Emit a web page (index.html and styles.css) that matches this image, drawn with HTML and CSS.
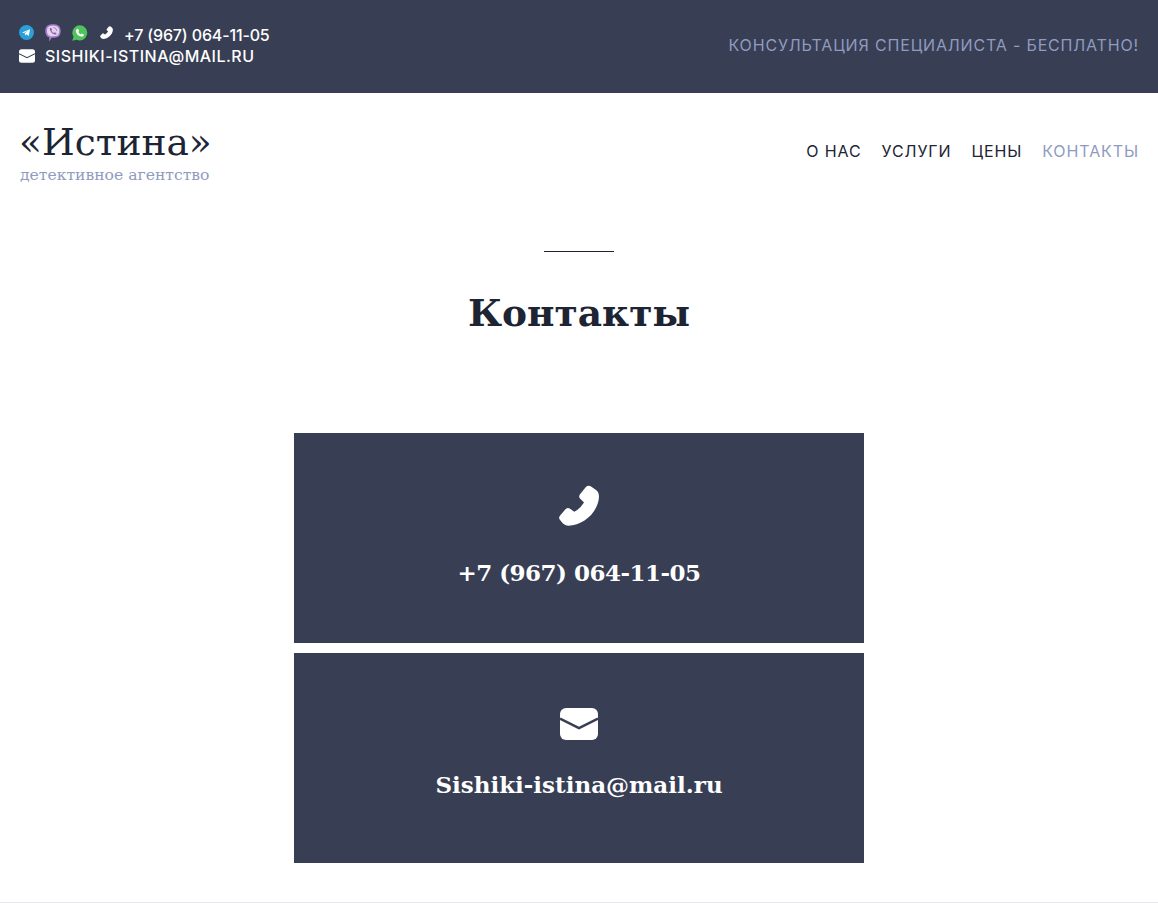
FILE: index.html
```html
<!DOCTYPE html>
<html lang="ru">
<head>
    <meta charset="UTF-8">
    <meta name="viewport" content="width=device-width, initial-scale=1.0">
    <title>Контакты - детективное агентство «Истина»</title>
    <link rel="stylesheet" href="styles.css">
</head>
<body>

<div class="topbar">
    <div class="topbar-contacts">
        <div class="topbar-row">
            <div class="messengers">
                <svg class="ico-tg" viewBox="0 0 16 16"><circle cx="8" cy="8" r="8" fill="#2a9fd8"/><path d="M3.200 8l8.600-3.500-1.400 7.200-2.600-1.900-1.300 1.300-.3-2.200 3.600-3.100-4.500 2.800z" fill="#fff"/></svg>
                <svg class="ico-viber" viewBox="0 0 16 18"><path d="M8 .3c4.300 0 7.700 1.300 7.700 6.700s-3 6.800-7.700 6.800H6.800L4.200 17.500v-3.900C1.400 12.500.3 10.300.3 7 .3 1.600 3.700.3 8 .3z" fill="#a77bc8"/><path d="M2 7c0-4.200 2.500-5.200 6-5.200s6.200 1 6.200 5.200-2.200 5.300-6.200 5.300H6.300L5.600 13v-.9C3 11.500 2 9.700 2 7z" fill="#e3d2ee"/><path d="M4.800 4.300l1.300-.5 1.100 1.900-.8.800c.5 1.200 1.300 2 2.500 2.500l.8-.8 1.900 1.100-.5 1.300c-3.300.2-6.500-3.100-6.300-6.300z" fill="#8f5fb0"/><path d="M8.500 3.600c1.800.1 3 1.300 3.100 3.200" fill="none" stroke="#8f5fb0" stroke-width=".8"/></svg>
                <svg class="ico-wa" viewBox="0 0 16 16"><path d="M8 .2a7.600 7.600 0 0 0-6.500 11.500L.3 15.800l4.200-1.100A7.600 7.600 0 1 0 8 .2z" fill="#4fc35c"/><path d="M5 3.900l1.100-.1 1 2.200-.8 1c.6 1.100 1.400 1.900 2.600 2.500l1-.9 2.100 1.100c-.2 1.400-1.400 2-2.600 1.800C6.300 11 4.100 8.800 3.800 6.200 3.700 5.200 4.200 4.300 5 3.900z" fill="#fff"/></svg>
                <svg class="ico-phone" viewBox="0 0 120 122"><path d="M80 6Q87-1 95 3L110 14Q120 20 120 35C118 80 75 120 28 122 18 122 10 113 10 113L2 103Q-2 96 4 90L18 74Q24 66 32 70L46 80Q62 72 75 52L63 40Q58 34 63 27Z" fill="#fff"/></svg>
            </div>
            <span class="topbar-text topbar-phone">+7 (967) 064-11-05</span>
        </div>
        <div class="topbar-row">
            <svg class="ico-mail" viewBox="0 0 38 32"><rect width="38" height="32" rx="6" fill="#fff"/><path d="M0 10.500L19 20 38 10.500" fill="none" stroke="#383e54" stroke-width="2.500"/></svg>
            <span class="topbar-text topbar-email">SISHIKI-ISTINA@MAIL.RU</span>
        </div>
    </div>
    <div class="topbar-note">КОНСУЛЬТАЦИЯ СПЕЦИАЛИСТА - БЕСПЛАТНО!</div>
</div>

<div class="header">
    <div class="logo">
        <div class="logo-name">«Истина»</div>
        <div class="logo-sub">детективное агентство</div>
    </div>
    <div class="menu">
        <a href="#">О НАС</a>
        <a href="#">УСЛУГИ</a>
        <a href="#">ЦЕНЫ</a>
        <a href="#" class="active">КОНТАКТЫ</a>
    </div>
</div>

<div class="page-title">
    <div class="title-line"></div>
    <h1>Контакты</h1>
</div>

<div class="cards">
    <div class="card">
        <svg class="card-phone" viewBox="0 0 120 122"><path d="M80 6Q87-1 95 3L110 14Q120 20 120 35C118 80 75 120 28 122 18 122 10 113 10 113L2 103Q-2 96 4 90L18 74Q24 66 32 70L46 80Q62 72 75 52L63 40Q58 34 63 27Z" fill="#fff"/></svg>
        <div class="card-text card-text-phone">+7 (967) 064-11-05</div>
    </div>
    <div class="card">
        <svg class="card-mail" viewBox="0 0 38 32"><rect width="38" height="32" rx="6" fill="#fff"/><path d="M0 10.500L19 20 38 10.500" fill="none" stroke="#383e54" stroke-width="2.500"/></svg>
        <div class="card-text">Sishiki-istina@mail.ru</div>
    </div>
</div>

<div class="footer-line"></div>

</body>
</html>
```

FILE: styles.css
```css
body {
    margin: 0;
    font-family: Inter, Arial, sans-serif;
    background-color: #fff;
    color: #1d2433;
    overflow: hidden;
}
a {
    text-decoration: none;
}
.topbar {
    height: 93px;
    padding: 0 19px 0 19px;
    box-sizing: border-box;
    background-color: #383e54;
    display: flex;
    align-items: center;
    justify-content: space-between;
}
.topbar-contacts {
    display: flex;
    flex-direction: column;
    margin-top: -3px;
}
.topbar-row {
    display: flex;
    align-items: center;
    height: 21px;
}
.messengers {
    display: flex;
    align-items: center;
    margin-bottom: 4px;
}
.topbar-text {
    color: #fff;
    font-size: 16px;
    font-weight: 500;
}
.topbar-phone {
    letter-spacing: -0.150px;
}
.topbar-email {
    letter-spacing: 0.500px;
}
.ico-tg {
    width: 15px;
    height: 15px;
    margin-right: 11px;
}
.ico-viber {
    width: 16px;
    height: 18px;
    margin-right: 11px;
}
.ico-wa {
    width: 16px;
    height: 16px;
    margin-right: 12px;
}
.ico-phone {
    width: 13px;
    height: 13px;
    margin-right: 11px;
}
.ico-mail {
    width: 16px;
    height: 14px;
    margin-right: 10px;
}
.topbar-note {
    color: #8f9bbf;
    font-size: 16px;
    letter-spacing: 0.830px;
    margin-top: -3px;
}
.header {
    display: flex;
    justify-content: space-between;
    padding: 25px 19px 0 19px;
    height: 93px;
}
.logo-name {
    font-family: "DejaVu Serif", serif;
    font-size: 37.500px;
    line-height: 48px;
}
.logo-sub {
    font-family: "DejaVu Serif", serif;
    font-size: 15.600px;
    line-height: 18px;
    margin-left: 1px;
    color: #8f9bbf;
}
.menu {
    display: flex;
    gap: 20px;
    margin-top: 23px;
    font-size: 16px;
    letter-spacing: 0.900px;
}
.menu a {
    color: #1d2433;
}
.menu a.active {
    color: #8f9bbf;
}
.page-title {
    text-align: center;
    padding-top: 40px;
}
.title-line {
    width: 70px;
    height: 1px;
    background-color: #1d2433;
    margin: 0 auto;
}
h1 {
    margin: 33px 0 0;
    font-family: "DejaVu Serif", serif;
    font-size: 37.500px;
    line-height: 56px;
    font-weight: 700;
}
.cards {
    width: 570px;
    margin: 92px auto 0;
    display: flex;
    flex-direction: column;
    gap: 10px;
}
.card {
    height: 210px;
    background-color: #383e54;
    display: flex;
    flex-direction: column;
    align-items: center;
    color: #fff;
}
.card-phone {
    width: 40px;
    height: 41px;
    margin-top: 52px;
}
.card-mail {
    width: 38px;
    height: 32px;
    margin-top: 55px;
}
.card-text {
    font-family: "DejaVu Serif", serif;
    font-size: 23px;
    font-weight: 700;
    line-height: 36px;
    margin-top: 27px;
}
.card-text-phone {
    letter-spacing: -0.500px;
    margin-top: 29px;
}
.footer-line {
    margin-top: 39px;
    height: 1px;
    background-color: #e8e8ec;
}
```
